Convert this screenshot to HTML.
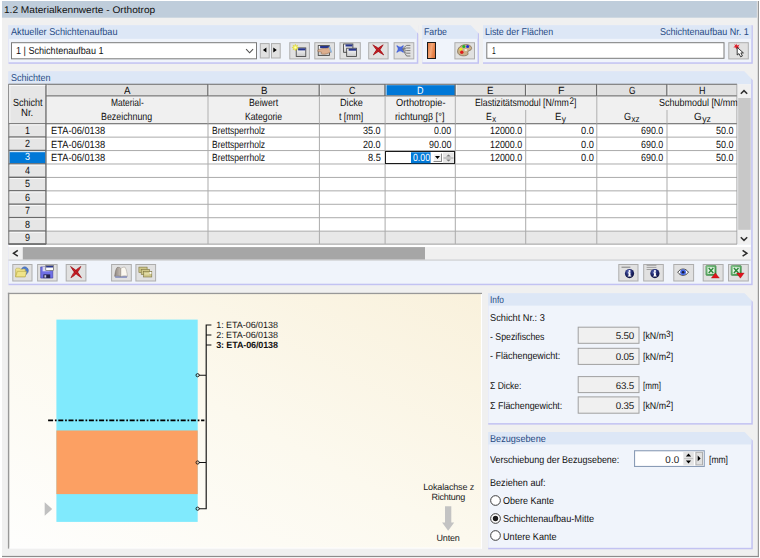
<!DOCTYPE html>
<html><head><meta charset="utf-8"><title>1.2 Materialkennwerte - Orthotrop</title>
<style>
html,body{margin:0;padding:0;}
body{width:760px;height:558px;overflow:hidden;background:#fff;font-family:"Liberation Sans",sans-serif;font-size:9.4px;color:#101010;position:relative;}
div{position:absolute;box-sizing:border-box;white-space:nowrap;}
svg{position:absolute;overflow:visible;}
.t{line-height:12px;height:12px;text-rendering:geometricPrecision;}

</style></head><body>
<svg style="left:0;top:0" width="760" height="558" viewBox="0 0 760 558"><rect x="0.00" y="0.00" width="760.00" height="558.00" fill="#fff"/><rect x="2.00" y="1.00" width="756.00" height="555.00" fill="#f0f0f0"/><rect x="757.80" y="1.00" width="1.10" height="556.10" fill="#8c8c8c"/><rect x="2.00" y="555.90" width="756.90" height="1.20" fill="#8c8c8c"/><rect x="2.00" y="1.00" width="754.90" height="16.70" fill="#bfcddb"/></svg>
<div class="t " style="left:3.80px;top:5.00px;font-size:9.7px;transform:scaleX(1.0439);transform-origin:0 50%;color:#111;">1.2 Materialkennwerte - Orthotrop</div>
<svg style="left:0;top:0" width="760" height="558" viewBox="0 0 760 558"><rect x="8.50" y="25.30" width="409.80" height="38.50" fill="#c2c2f2"/><rect x="8.50" y="25.30" width="408.30" height="37.00" fill="#f0f4fb"/><rect x="8.50" y="25.30" width="408.30" height="13.50" fill="#dde7f6"/><path d="M409.70 24.80H418.80V34.20Z" fill="#f0f0f0"/></svg>
<div class="t " style="left:10.50px;top:27.00px;font-size:9.9px;transform:scaleX(0.9282);transform-origin:0 50%;color:#274a84;">Aktueller Schichtenaufbau</div>
<svg style="left:0;top:0" width="760" height="558" viewBox="0 0 760 558"><rect x="11.50" y="42.70" width="245.00" height="16.10" fill="#ffffff" stroke="#7a7a7a" stroke-width="1.0"/></svg>
<div class="t " style="left:16.25px;top:46.00px;font-size:10.2px;transform:scaleX(0.8895);transform-origin:0 50%;">1 | Schichtenaufbau 1</div>
<svg style="left:0;top:0" width="760" height="558" viewBox="0 0 760 558"><rect x="260.30" y="43.60" width="8.90" height="14.40" fill="#e1e1e1" stroke="#adadad" stroke-width="1.0"/><rect x="271.50" y="43.60" width="8.70" height="14.40" fill="#e1e1e1" stroke="#adadad" stroke-width="1.0"/></svg>
<svg style="left:0;top:0" width="760" height="558" viewBox="0 0 760 558"><path d="M246.1 49.1 L249.6 52.8 L253.1 49.1" fill="none" stroke="#505050" stroke-width="1.05"/><path d="M266.4 47.6 L262.9 50.1 L266.4 52.6Z M273.3 47.6 L276.8 50.1 L273.3 52.6Z" fill="#000"/></svg>
<svg style="left:0;top:0" width="760" height="558" viewBox="0 0 760 558"><rect x="289.80" y="42.70" width="19.60" height="16.20" fill="#e1e1e1" stroke="#adadad" stroke-width="1.0"/><rect x="314.80" y="42.70" width="19.70" height="16.20" fill="#e1e1e1" stroke="#adadad" stroke-width="1.0"/><rect x="340.00" y="42.70" width="20.30" height="16.20" fill="#e1e1e1" stroke="#adadad" stroke-width="1.0"/><rect x="368.70" y="42.70" width="19.40" height="16.20" fill="#e1e1e1" stroke="#adadad" stroke-width="1.0"/><rect x="394.10" y="42.70" width="19.70" height="16.20" fill="#e1e1e1" stroke="#adadad" stroke-width="1.0"/><rect x="422.30" y="25.30" width="56.70" height="38.50" fill="#c2c2f2"/><rect x="422.30" y="25.30" width="55.20" height="37.00" fill="#f0f4fb"/><rect x="422.30" y="25.30" width="55.20" height="13.50" fill="#dde7f6"/><path d="M470.40 24.80H479.50V34.20Z" fill="#f0f0f0"/></svg>
<div class="t " style="left:424.20px;top:27.00px;font-size:9.9px;transform:scaleX(0.8877);transform-origin:0 50%;color:#274a84;">Farbe</div>
<div class="" style="left:427.20px;top:42.00px;width:9.20px;height:16.80px;background:linear-gradient(100deg,#e27a42,#f4a878 45%,#e8854d 70%,#d9703a);border:1.1px solid #1a1a1a;"></div>
<svg style="left:0;top:0" width="760" height="558" viewBox="0 0 760 558"><rect x="454.90" y="42.70" width="19.60" height="16.20" fill="#e1e1e1" stroke="#adadad" stroke-width="1.0"/><rect x="483.00" y="25.30" width="269.80" height="38.50" fill="#c2c2f2"/><rect x="483.00" y="25.30" width="268.30" height="37.00" fill="#f0f4fb"/><rect x="483.00" y="25.30" width="268.30" height="13.50" fill="#dde7f6"/></svg>
<div class="t " style="left:485.00px;top:27.00px;font-size:9.9px;transform:scaleX(0.9008);transform-origin:0 50%;color:#274a84;">Liste der Flächen</div>
<div class="t " style="left:659.50px;top:27.00px;font-size:9.9px;transform:scaleX(0.9133);transform-origin:0 50%;color:#274a84;">Schichtenaufbau Nr. 1</div>
<svg style="left:0;top:0" width="760" height="558" viewBox="0 0 760 558"><rect x="486.80" y="42.70" width="237.20" height="15.60" fill="#ffffff" stroke="#7a7a7a" stroke-width="1.0"/></svg>
<div class="t " style="left:492.30px;top:46.00px;font-size:10.2px;transform:scaleX(0.6523);transform-origin:0 50%;">1</div>
<svg style="left:0;top:0" width="760" height="558" viewBox="0 0 760 558"><rect x="728.80" y="42.70" width="19.50" height="16.20" fill="#e1e1e1" stroke="#adadad" stroke-width="1.0"/><rect x="8.50" y="71.50" width="744.20" height="213.70" fill="#c2c2f2"/><rect x="8.50" y="71.50" width="742.70" height="212.20" fill="#f0f4fb"/><rect x="8.50" y="71.50" width="742.70" height="12.50" fill="#dde7f6"/><path d="M744.10 71.00H753.20V80.40Z" fill="#f0f0f0"/></svg>
<div class="t " style="left:10.50px;top:73.00px;font-size:9.9px;transform:scaleX(0.9107);transform-origin:0 50%;color:#274a84;">Schichten</div>
<svg style="left:0;top:0" width="760" height="558" viewBox="0 0 760 558"><rect x="8.50" y="84.20" width="728.50" height="159.90" fill="#fff"/><rect x="8.50" y="84.20" width="728.50" height="39.50" fill="#f0f0f0"/><rect x="46.00" y="84.20" width="691.00" height="11.80" fill="#e0e0e0"/><rect x="8.50" y="84.20" width="37.50" height="159.90" fill="#e6e6e6"/><rect x="46.00" y="231.14" width="691.00" height="12.96" fill="#e8e8e8"/><rect x="385.10" y="85.20" width="70.20" height="10.30" fill="#0078d7"/><rect x="9.50" y="151.06" width="36.00" height="12.43" fill="#0078d7"/><rect x="46.00" y="136.63" width="691.00" height="1.00" fill="#ababab"/><rect x="46.00" y="150.06" width="691.00" height="1.00" fill="#ababab"/><rect x="46.00" y="163.49" width="691.00" height="1.00" fill="#ababab"/><rect x="46.00" y="176.92" width="691.00" height="1.00" fill="#ababab"/><rect x="46.00" y="190.35" width="691.00" height="1.00" fill="#ababab"/><rect x="46.00" y="203.78" width="691.00" height="1.00" fill="#ababab"/><rect x="46.00" y="217.21" width="691.00" height="1.00" fill="#ababab"/><rect x="46.00" y="230.64" width="691.00" height="1.00" fill="#ababab"/><rect x="46.00" y="243.60" width="691.00" height="1.00" fill="#ababab"/><rect x="207.50" y="123.70" width="1.00" height="120.40" fill="#ababab"/><rect x="318.90" y="123.70" width="1.00" height="120.40" fill="#ababab"/><rect x="384.60" y="123.70" width="1.00" height="120.40" fill="#ababab"/><rect x="454.80" y="123.70" width="1.00" height="120.40" fill="#ababab"/><rect x="525.20" y="123.70" width="1.00" height="120.40" fill="#ababab"/><rect x="596.30" y="123.70" width="1.00" height="120.40" fill="#ababab"/><rect x="666.50" y="123.70" width="1.00" height="120.40" fill="#ababab"/><rect x="8.50" y="83.70" width="728.50" height="1.20" fill="#7d7d7d"/><rect x="46.00" y="95.20" width="691.00" height="1.30" fill="#808080"/><rect x="8.50" y="123.00" width="728.50" height="1.30" fill="#808080"/><rect x="46.40" y="84.80" width="1.00" height="10.40" fill="#f8f8f8"/><rect x="208.40" y="84.80" width="1.00" height="10.40" fill="#f8f8f8"/><rect x="319.80" y="84.80" width="1.00" height="10.40" fill="#f8f8f8"/><rect x="385.50" y="84.80" width="1.00" height="10.40" fill="#f8f8f8"/><rect x="455.70" y="84.80" width="1.00" height="10.40" fill="#f8f8f8"/><rect x="526.10" y="84.80" width="1.00" height="10.40" fill="#f8f8f8"/><rect x="597.20" y="84.80" width="1.00" height="10.40" fill="#f8f8f8"/><rect x="667.40" y="84.80" width="1.00" height="10.40" fill="#f8f8f8"/><rect x="207.20" y="84.20" width="1.20" height="11.80" fill="#6c6c6c"/><rect x="318.60" y="84.20" width="1.20" height="11.80" fill="#6c6c6c"/><rect x="384.30" y="84.20" width="1.20" height="11.80" fill="#6c6c6c"/><rect x="454.50" y="84.20" width="1.20" height="11.80" fill="#6c6c6c"/><rect x="524.90" y="84.20" width="1.20" height="11.80" fill="#6c6c6c"/><rect x="596.00" y="84.20" width="1.20" height="11.80" fill="#6c6c6c"/><rect x="666.20" y="84.20" width="1.20" height="11.80" fill="#6c6c6c"/><rect x="207.50" y="96.00" width="1.00" height="27.70" fill="#b0b0b0"/><rect x="318.90" y="96.00" width="1.00" height="27.70" fill="#b0b0b0"/><rect x="384.60" y="96.00" width="1.00" height="27.70" fill="#b0b0b0"/><rect x="454.80" y="96.00" width="1.00" height="27.70" fill="#b0b0b0"/><rect x="525.20" y="110.00" width="1.00" height="13.70" fill="#b0b0b0"/><rect x="596.30" y="96.00" width="1.00" height="27.70" fill="#b0b0b0"/><rect x="666.50" y="110.00" width="1.00" height="13.70" fill="#b0b0b0"/><rect x="8.50" y="136.33" width="37.50" height="1.40" fill="#6a6a6a"/><rect x="8.50" y="149.76" width="37.50" height="1.40" fill="#6a6a6a"/><rect x="8.50" y="163.19" width="37.50" height="1.40" fill="#6a6a6a"/><rect x="8.50" y="176.62" width="37.50" height="1.40" fill="#6a6a6a"/><rect x="8.50" y="190.05" width="37.50" height="1.40" fill="#6a6a6a"/><rect x="8.50" y="203.48" width="37.50" height="1.40" fill="#6a6a6a"/><rect x="8.50" y="216.91" width="37.50" height="1.40" fill="#6a6a6a"/><rect x="8.50" y="230.34" width="37.50" height="1.40" fill="#6a6a6a"/><rect x="8.50" y="243.30" width="37.50" height="1.40" fill="#6a6a6a"/><rect x="9.50" y="124.30" width="35.80" height="1.00" fill="#fbfbfb"/><rect x="9.50" y="137.73" width="35.80" height="1.00" fill="#fbfbfb"/><rect x="9.50" y="151.16" width="35.80" height="1.00" fill="#fbfbfb"/><rect x="9.50" y="164.59" width="35.80" height="1.00" fill="#fbfbfb"/><rect x="9.50" y="178.02" width="35.80" height="1.00" fill="#fbfbfb"/><rect x="9.50" y="191.45" width="35.80" height="1.00" fill="#fbfbfb"/><rect x="9.50" y="204.88" width="35.80" height="1.00" fill="#fbfbfb"/><rect x="9.50" y="218.31" width="35.80" height="1.00" fill="#fbfbfb"/><rect x="9.50" y="231.74" width="35.80" height="1.00" fill="#fbfbfb"/><rect x="45.30" y="84.20" width="1.30" height="159.90" fill="#6a6a6a"/><rect x="8.20" y="84.20" width="1.10" height="159.90" fill="#7d7d7d"/><rect x="9.30" y="84.90" width="1.00" height="38.10" fill="#fbfbfb"/><rect x="9.30" y="84.90" width="36.00" height="1.00" fill="#fbfbfb"/><rect x="736.50" y="84.20" width="1.00" height="159.90" fill="#9a9a9a"/><rect x="8.50" y="243.50" width="38.00" height="1.20" fill="#6a6a6a"/><rect x="46.50" y="243.90" width="690.50" height="1.10" fill="#c0c0c0"/><rect x="8.50" y="245.00" width="742.20" height="2.20" fill="#fff"/></svg>
<div class="t " style="left:12.50px;top:98.00px;font-size:10.4px;transform:scaleX(0.8657);transform-origin:0 50%;">Schicht</div>
<div class="t " style="left:21.25px;top:108.00px;font-size:10.4px;transform:scaleX(0.9224);transform-origin:0 50%;">Nr.</div>
<div class="t " style="left:123.90px;top:86.00px;font-size:10.4px;transform:scaleX(0.9369);transform-origin:0 50%;">A</div>
<div class="t " style="left:260.60px;top:86.00px;font-size:10.4px;transform:scaleX(0.9369);transform-origin:0 50%;">B</div>
<div class="t " style="left:349.15px;top:86.00px;font-size:10.4px;transform:scaleX(0.8649);transform-origin:0 50%;">C</div>
<div class="t " style="left:417.10px;top:86.00px;font-size:10.4px;transform:scaleX(0.8649);transform-origin:0 50%;color:#fff;">D</div>
<div class="t " style="left:487.40px;top:86.00px;font-size:10.4px;transform:scaleX(0.9369);transform-origin:0 50%;">E</div>
<div class="t " style="left:558.15px;top:86.00px;font-size:10.4px;transform:scaleX(1.0221);transform-origin:0 50%;">F</div>
<div class="t " style="left:628.80px;top:86.00px;font-size:10.4px;transform:scaleX(0.8031);transform-origin:0 50%;">G</div>
<div class="t " style="left:698.90px;top:86.00px;font-size:10.4px;transform:scaleX(0.8649);transform-origin:0 50%;">H</div>
<div class="t " style="left:110.50px;top:98.00px;font-size:10.4px;transform:scaleX(0.8090);transform-origin:0 50%;">Material-</div>
<div class="t " style="left:101.00px;top:112.00px;font-size:10.4px;transform:scaleX(0.8520);transform-origin:0 50%;">Bezeichnung</div>
<div class="t " style="left:248.80px;top:98.00px;font-size:10.4px;transform:scaleX(0.8397);transform-origin:0 50%;">Beiwert</div>
<div class="t " style="left:244.60px;top:112.00px;font-size:10.4px;transform:scaleX(0.8340);transform-origin:0 50%;">Kategorie</div>
<div class="t " style="left:339.60px;top:98.00px;font-size:10.4px;transform:scaleX(0.8813);transform-origin:0 50%;">Dicke</div>
<div class="t " style="left:339.00px;top:112.00px;font-size:10.4px;transform:scaleX(0.8385);transform-origin:0 50%;">t [mm]</div>
<div class="t " style="left:396.20px;top:98.00px;font-size:10.4px;transform:scaleX(0.8926);transform-origin:0 50%;">Orthotropie-</div>
<div class="t " style="left:394.70px;top:112.00px;font-size:10.4px;transform:scaleX(0.8929);transform-origin:0 50%;">richtung<span style="font-size:9.8px">β</span> [°]</div>
<div class="t " style="left:474.80px;top:98.00px;font-size:10.4px;transform:scaleX(0.8411);transform-origin:0 50%;">Elastizitätsmodul [N/mm<span style="font-size:9.6px;line-height:0;position:relative;top:-2.4px;margin-left:1px">2</span>]</div>
<div class="t " style="left:485.80px;top:112.00px;font-size:10.4px;transform:scaleX(0.8395);transform-origin:0 50%;">E<span style="font-size:9.2px;line-height:0;position:relative;top:1.8px;margin-left:0.5px">x</span></div>
<div class="t " style="left:555.30px;top:112.00px;font-size:10.4px;transform:scaleX(0.9226);transform-origin:0 50%;">E<span style="font-size:9.2px;line-height:0;position:relative;top:1.8px;margin-left:0.5px">y</span></div>
<div class="t " style="left:658.50px;top:98.00px;font-size:10.4px;transform:scaleX(0.8636);transform-origin:0 50%;">Schubmodul [N/mm</div>
<div class="t " style="left:623.80px;top:112.00px;font-size:10.4px;transform:scaleX(0.8773);transform-origin:0 50%;">G<span style="font-size:9.2px;line-height:0;position:relative;top:1.8px;margin-left:0.5px">xz</span></div>
<div class="t " style="left:694.10px;top:112.00px;font-size:10.4px;transform:scaleX(0.9504);transform-origin:0 50%;">G<span style="font-size:9.2px;line-height:0;position:relative;top:1.8px;margin-left:0.5px">yz</span></div>
<div class="t " style="left:25.10px;top:126.00px;font-size:10.4px;transform:scaleX(0.8649);transform-origin:0 50%;">1</div>
<div class="t " style="left:25.10px;top:139.00px;font-size:10.4px;transform:scaleX(0.8649);transform-origin:0 50%;">2</div>
<div class="t " style="left:25.10px;top:152.00px;font-size:10.4px;transform:scaleX(0.8649);transform-origin:0 50%;color:#fff;">3</div>
<div class="t " style="left:25.10px;top:166.00px;font-size:10.4px;transform:scaleX(0.8649);transform-origin:0 50%;">4</div>
<div class="t " style="left:25.10px;top:179.00px;font-size:10.4px;transform:scaleX(0.8649);transform-origin:0 50%;">5</div>
<div class="t " style="left:25.10px;top:193.00px;font-size:10.4px;transform:scaleX(0.8649);transform-origin:0 50%;">6</div>
<div class="t " style="left:25.10px;top:206.00px;font-size:10.4px;transform:scaleX(0.8649);transform-origin:0 50%;">7</div>
<div class="t " style="left:25.10px;top:220.00px;font-size:10.4px;transform:scaleX(0.8649);transform-origin:0 50%;">8</div>
<div class="t " style="left:25.10px;top:233.00px;font-size:10.4px;transform:scaleX(0.8649);transform-origin:0 50%;">9</div>
<div class="t " style="left:50.50px;top:126.00px;font-size:10.4px;transform:scaleX(0.8947);transform-origin:0 50%;">ETA-06/0138</div>
<div class="t " style="left:212.20px;top:126.00px;font-size:10.4px;transform:scaleX(0.8209);transform-origin:0 50%;">Brettsperrholz</div>
<div class="t " style="left:363.20px;top:126.00px;font-size:10.4px;transform:scaleX(0.8698);transform-origin:0 50%;">35.0</div>
<div class="t " style="left:434.10px;top:126.00px;font-size:10.4px;transform:scaleX(0.8451);transform-origin:0 50%;">0.00</div>
<div class="t " style="left:490.00px;top:126.00px;font-size:10.4px;transform:scaleX(0.8572);transform-origin:0 50%;">12000.0</div>
<div class="t " style="left:580.50px;top:126.00px;font-size:10.4px;transform:scaleX(0.8925);transform-origin:0 50%;">0.0</div>
<div class="t " style="left:640.60px;top:126.00px;font-size:10.4px;transform:scaleX(0.8572);transform-origin:0 50%;">690.0</div>
<div class="t " style="left:716.40px;top:126.00px;font-size:10.4px;transform:scaleX(0.8649);transform-origin:0 50%;">50.0</div>
<div class="t " style="left:50.50px;top:140.00px;font-size:10.4px;transform:scaleX(0.8947);transform-origin:0 50%;">ETA-06/0138</div>
<div class="t " style="left:212.20px;top:140.00px;font-size:10.4px;transform:scaleX(0.8209);transform-origin:0 50%;">Brettsperrholz</div>
<div class="t " style="left:363.20px;top:140.00px;font-size:10.4px;transform:scaleX(0.8698);transform-origin:0 50%;">20.0</div>
<div class="t " style="left:428.80px;top:140.00px;font-size:10.4px;transform:scaleX(0.8610);transform-origin:0 50%;">90.00</div>
<div class="t " style="left:490.00px;top:140.00px;font-size:10.4px;transform:scaleX(0.8572);transform-origin:0 50%;">12000.0</div>
<div class="t " style="left:580.50px;top:140.00px;font-size:10.4px;transform:scaleX(0.8925);transform-origin:0 50%;">0.0</div>
<div class="t " style="left:640.60px;top:140.00px;font-size:10.4px;transform:scaleX(0.8572);transform-origin:0 50%;">690.0</div>
<div class="t " style="left:716.40px;top:140.00px;font-size:10.4px;transform:scaleX(0.8649);transform-origin:0 50%;">50.0</div>
<div class="t " style="left:50.50px;top:153.00px;font-size:10.4px;transform:scaleX(0.8947);transform-origin:0 50%;">ETA-06/0138</div>
<div class="t " style="left:212.20px;top:153.00px;font-size:10.4px;transform:scaleX(0.8209);transform-origin:0 50%;">Brettsperrholz</div>
<div class="t " style="left:368.00px;top:153.00px;font-size:10.4px;transform:scaleX(0.8856);transform-origin:0 50%;">8.5</div>
<div class="t " style="left:490.00px;top:153.00px;font-size:10.4px;transform:scaleX(0.8572);transform-origin:0 50%;">12000.0</div>
<div class="t " style="left:580.50px;top:153.00px;font-size:10.4px;transform:scaleX(0.8925);transform-origin:0 50%;">0.0</div>
<div class="t " style="left:640.60px;top:153.00px;font-size:10.4px;transform:scaleX(0.8572);transform-origin:0 50%;">690.0</div>
<div class="t " style="left:716.40px;top:153.00px;font-size:10.4px;transform:scaleX(0.8649);transform-origin:0 50%;">50.0</div>
<div class="" style="left:384.70px;top:151.46px;width:70.80px;height:13.03px;background:#fff;border:1.2px solid #1a1a1a;"></div>
<svg style="left:0;top:0" width="760" height="558" viewBox="0 0 760 558"><rect x="411.00" y="152.26" width="19.60" height="11.03" fill="#0078d7"/></svg>
<div class="t " style="left:413.00px;top:153.00px;font-size:10.4px;transform:scaleX(0.8402);transform-origin:0 50%;color:#fff;">0.00</div>
<div class="" style="left:432.80px;top:152.56px;width:9.60px;height:9.23px;background:#f2f2f2;border-right:1px solid #8a8a8a;border-bottom:1px solid #8a8a8a;border-top:1px solid #fff;border-left:1px solid #fff;"></div>
<svg style="left:435.2px;top:155.6px" width="5" height="3" viewBox="0 0 5 3"><path d="M0 0H5L2.5 3Z" fill="#000"/></svg>
<svg style="left:0;top:0" width="760" height="558" viewBox="0 0 760 558"><rect x="443.00" y="152.56" width="10.80" height="10.53" fill="#e6e6e6"/></svg>
<svg style="left:443px;top:152.6px" width="11" height="10" viewBox="0 0 11 10"><path d="M3.2 3.6 L5.5 1.4 L7.8 3.6Z M3.2 6.4 L5.5 8.6 L7.8 6.4Z" fill="#777"/><path d="M0.5 5H10.5" stroke="#9a9a9a" stroke-width="0.9"/></svg>
<svg style="left:0;top:0" width="760" height="558" viewBox="0 0 760 558"><rect x="737.50" y="84.20" width="13.20" height="160.40" fill="#f0f0f0"/><rect x="738.20" y="98.00" width="12.50" height="131.80" fill="#c8c8c8"/></svg>
<svg style="left:740.2px;top:88.6px" width="8" height="6" viewBox="0 0 8 6"><path d="M0.8 4.8 L4 1.6 L7.2 4.8" fill="none" stroke="#303030" stroke-width="1.5"/></svg>
<svg style="left:740.4px;top:235.8px" width="8" height="6" viewBox="0 0 8 6"><path d="M0.8 1.2 L4 4.4 L7.2 1.2" fill="none" stroke="#303030" stroke-width="1.5"/></svg>
<svg style="left:0;top:0" width="760" height="558" viewBox="0 0 760 558"><rect x="8.50" y="247.10" width="742.20" height="12.50" fill="#f0f0f0"/><rect x="22.80" y="247.10" width="402.20" height="12.50" fill="#a6a6a6"/><rect x="8.50" y="259.60" width="742.20" height="0.90" fill="#c2c2c2"/></svg>
<svg style="left:0;top:0" width="760" height="558" viewBox="0 0 760 558"><path d="M17.8 250.4 L13.5 253.3 L17.8 256.2 M742.6 250.4 L746.9 253.3 L742.6 256.2" fill="none" stroke="#2a2a2a" stroke-width="1.5"/></svg>
<svg style="left:0;top:0" width="760" height="558" viewBox="0 0 760 558"><rect x="12.80" y="264.50" width="19.20" height="16.50" fill="#e1e1e1" stroke="#adadad" stroke-width="1.0"/><rect x="37.60" y="264.50" width="19.50" height="16.50" fill="#e1e1e1" stroke="#adadad" stroke-width="1.0"/><rect x="66.20" y="264.50" width="19.70" height="16.50" fill="#e1e1e1" stroke="#adadad" stroke-width="1.0"/><rect x="111.60" y="264.50" width="19.70" height="16.50" fill="#e1e1e1" stroke="#adadad" stroke-width="1.0"/><rect x="135.90" y="264.50" width="19.70" height="16.50" fill="#e1e1e1" stroke="#adadad" stroke-width="1.0"/><rect x="618.80" y="264.50" width="19.20" height="16.50" fill="#e1e1e1" stroke="#adadad" stroke-width="1.0"/><rect x="643.70" y="264.50" width="19.60" height="16.50" fill="#e1e1e1" stroke="#adadad" stroke-width="1.0"/><rect x="673.80" y="264.50" width="19.80" height="16.50" fill="#e1e1e1" stroke="#adadad" stroke-width="1.0"/><rect x="703.20" y="264.50" width="19.90" height="16.50" fill="#e1e1e1" stroke="#adadad" stroke-width="1.0"/><rect x="728.50" y="264.50" width="19.80" height="16.50" fill="#e1e1e1" stroke="#adadad" stroke-width="1.0"/></svg>
<div class="" style="left:9.00px;top:294.00px;width:472.00px;height:254.00px;background:linear-gradient(to top right,#fefefd 0%,#fcf9ee 50%,#f9f1dc 100%);"></div>
<svg style="left:0;top:0" width="760" height="558" viewBox="0 0 760 558"><rect x="7.90" y="292.80" width="1.40" height="255.80" fill="#989898"/><rect x="7.90" y="292.80" width="474.10" height="1.30" fill="#989898"/><rect x="480.90" y="294.10" width="1.10" height="254.50" fill="#ffffff"/><rect x="9.30" y="547.60" width="472.70" height="1.00" fill="#ffffff"/><rect x="56.40" y="319.60" width="141.30" height="202.30" fill="#80eafd"/><rect x="56.40" y="430.50" width="141.30" height="63.60" fill="#fca063"/></svg>
<svg style="left:0;top:0" width="760" height="558" viewBox="0 0 760 558"><path d="M48.1 420.4H204.4" stroke="#000" stroke-width="1.8" stroke-dasharray="5 1.8 1.7 1.7" fill="none"/><path d="M211.4 325H206.2V508.7H199 M206.2 335H211.4 M206.2 345H211.4 M206.2 375.2H199 M206.2 462.5H199" stroke="#111" stroke-width="1.15" fill="none"/><circle cx="197.6" cy="375.2" r="1.6" fill="none" stroke="#111" stroke-width="0.9"/><circle cx="197.6" cy="462.5" r="1.6" fill="none" stroke="#111" stroke-width="0.9"/><circle cx="197.6" cy="508.7" r="1.6" fill="none" stroke="#111" stroke-width="0.9"/><path d="M44.7 502.3V515.7L52.2 509Z" fill="#c0c0c0"/><path d="M445 506.3H451.3V522.6H454.2L448.15 530.8L442.1 522.6H445Z" fill="#c3c3c3"/></svg>
<div class="t " style="left:216.20px;top:319.00px;font-size:9px;letter-spacing:-0.048px;color:#151515;">1: ETA-06/0138</div>
<div class="t " style="left:216.20px;top:329.00px;font-size:9px;letter-spacing:-0.048px;color:#151515;">2: ETA-06/0138</div>
<div class="t " style="left:216.20px;top:339.00px;font-size:9px;letter-spacing:-0.120px;color:#111;font-weight:bold;">3: ETA-06/0138</div>
<div class="t " style="left:423.20px;top:481.00px;font-size:9px;letter-spacing:-0.137px;color:#222;">Lokalachse z</div>
<div class="t " style="left:431.50px;top:491.00px;font-size:9px;letter-spacing:-0.241px;color:#222;">Richtung</div>
<div class="t " style="left:436.60px;top:532.00px;font-size:9px;letter-spacing:-0.226px;color:#222;">Unten</div>
<svg style="left:0;top:0" width="760" height="558" viewBox="0 0 760 558"><rect x="488.20" y="293.30" width="264.60" height="131.30" fill="#c2c2f2"/><rect x="488.20" y="293.30" width="263.10" height="129.80" fill="#f0f4fb"/><rect x="488.20" y="293.30" width="263.10" height="12.30" fill="#dde7f6"/><path d="M744.20 292.80H753.30V302.20Z" fill="#f0f0f0"/></svg>
<div class="t " style="left:489.60px;top:295.00px;font-size:9.9px;transform:scaleX(0.8432);transform-origin:0 50%;color:#274a84;">Info</div>
<div class="t " style="left:490.00px;top:313.00px;font-size:10px;transform:scaleX(0.9215);transform-origin:0 50%;">Schicht Nr.: 3</div>
<div class="t " style="left:490.00px;top:332.00px;font-size:10px;transform:scaleX(0.8755);transform-origin:0 50%;">- Spezifisches</div>
<div class="t " style="left:490.00px;top:351.00px;font-size:10px;transform:scaleX(0.8970);transform-origin:0 50%;">- Flächengewicht:</div>
<div class="t " style="left:490.40px;top:381.00px;font-size:10px;transform:scaleX(0.8544);transform-origin:0 50%;">Σ Dicke:</div>
<div class="t " style="left:490.40px;top:401.00px;font-size:10px;transform:scaleX(0.8900);transform-origin:0 50%;">Σ Flächengewicht:</div>
<svg style="left:0;top:0" width="760" height="558" viewBox="0 0 760 558"><rect x="578.20" y="327.20" width="60.80" height="16.10" fill="#f0f0f0" stroke="#a0a0a0" stroke-width="1.0"/></svg>
<div class="t " style="left:615.70px;top:331.00px;font-size:9.8px;letter-spacing:-0.145px;color:#222;">5.50</div>
<div class="t " style="left:642.60px;top:331.00px;font-size:10px;transform:scaleX(0.8825);transform-origin:0 50%;">[kN/m<span style="font-size:9.4px;line-height:0;position:relative;top:-2.4px;">3</span>]</div>
<svg style="left:0;top:0" width="760" height="558" viewBox="0 0 760 558"><rect x="578.20" y="348.30" width="60.80" height="16.10" fill="#f0f0f0" stroke="#a0a0a0" stroke-width="1.0"/></svg>
<div class="t " style="left:615.70px;top:352.00px;font-size:9.8px;letter-spacing:-0.145px;color:#222;">0.05</div>
<div class="t " style="left:642.60px;top:352.00px;font-size:10px;transform:scaleX(0.8825);transform-origin:0 50%;">[kN/m<span style="font-size:9.4px;line-height:0;position:relative;top:-2.4px;">2</span>]</div>
<svg style="left:0;top:0" width="760" height="558" viewBox="0 0 760 558"><rect x="578.20" y="376.60" width="60.80" height="16.00" fill="#f0f0f0" stroke="#a0a0a0" stroke-width="1.0"/></svg>
<div class="t " style="left:615.70px;top:381.00px;font-size:9.8px;letter-spacing:-0.145px;color:#222;">63.5</div>
<div class="t " style="left:642.60px;top:381.00px;font-size:10px;transform:scaleX(0.8056);transform-origin:0 50%;">[mm]</div>
<svg style="left:0;top:0" width="760" height="558" viewBox="0 0 760 558"><rect x="578.20" y="396.90" width="60.80" height="16.30" fill="#f0f0f0" stroke="#a0a0a0" stroke-width="1.0"/></svg>
<div class="t " style="left:615.70px;top:401.00px;font-size:9.8px;letter-spacing:-0.145px;color:#222;">0.35</div>
<div class="t " style="left:642.60px;top:401.00px;font-size:10px;transform:scaleX(0.8825);transform-origin:0 50%;">[kN/m<span style="font-size:9.4px;line-height:0;position:relative;top:-2.4px;">2</span>]</div>
<svg style="left:0;top:0" width="760" height="558" viewBox="0 0 760 558"><rect x="488.20" y="432.00" width="264.60" height="117.30" fill="#c2c2f2"/><rect x="488.20" y="432.00" width="263.10" height="115.80" fill="#f0f4fb"/><rect x="488.20" y="432.00" width="263.10" height="12.50" fill="#dde7f6"/><path d="M744.20 431.50H753.30V440.90Z" fill="#f0f0f0"/></svg>
<div class="t " style="left:489.60px;top:434.00px;font-size:10px;transform:scaleX(0.9122);transform-origin:0 50%;color:#274a84;">Bezugsebene</div>
<div class="t " style="left:490.00px;top:455.00px;font-size:10px;transform:scaleX(0.8944);transform-origin:0 50%;">Verschiebung der Bezugsebene:</div>
<svg style="left:0;top:0" width="760" height="558" viewBox="0 0 760 558"><rect x="634.55" y="450.75" width="69.70" height="15.70" fill="#fff" stroke="#8a9cb6" stroke-width="1.1"/></svg>
<div class="t " style="left:665.30px;top:455.00px;font-size:9.8px;letter-spacing:0.192px;color:#222;">0.0</div>
<svg style="left:0;top:0" width="760" height="558" viewBox="0 0 760 558"><rect x="683.30" y="451.80" width="10.50" height="13.60" fill="#e3e3e3"/><rect x="695.90" y="452.30" width="6.60" height="12.60" fill="#e1e1e1" stroke="#adadad" stroke-width="1.0"/></svg>
<svg style="left:0;top:0" width="760" height="558" viewBox="0 0 760 558"><path d="M685.9 456.6 L688.5 453.6 L691.1 456.6Z M685.9 460.6 L688.5 463.6 L691.1 460.6Z M697.7 455.6 L700.6 458.4 L697.7 461.2Z" fill="#000"/><path d="M684 458.6H693.2" stroke="#b8b8b8" stroke-width="0.8"/></svg>
<div class="t " style="left:708.60px;top:455.00px;font-size:10px;transform:scaleX(0.8551);transform-origin:0 50%;">[mm]</div>
<div class="t " style="left:490.00px;top:478.00px;font-size:10px;transform:scaleX(0.9089);transform-origin:0 50%;">Beziehen auf:</div>
<svg style="left:490px;top:494.8px" width="11" height="11" viewBox="0 0 11 11"><circle cx="5.5" cy="5.5" r="4.85" fill="#fff" stroke="#3c3c3c" stroke-width="1"/></svg>
<div class="t " style="left:503.00px;top:496.00px;font-size:10px;transform:scaleX(0.8974);transform-origin:0 50%;">Obere Kante</div>
<svg style="left:490px;top:512.6px" width="11" height="11" viewBox="0 0 11 11"><circle cx="5.5" cy="5.5" r="4.85" fill="#fff" stroke="#3c3c3c" stroke-width="1"/><circle cx="5.5" cy="5.5" r="2.7" fill="#1c1c1c"/></svg>
<div class="t " style="left:503.00px;top:514.00px;font-size:10px;transform:scaleX(0.9164);transform-origin:0 50%;">Schichtenaufbau-Mitte</div>
<svg style="left:490px;top:530.2px" width="11" height="11" viewBox="0 0 11 11"><circle cx="5.5" cy="5.5" r="4.85" fill="#fff" stroke="#3c3c3c" stroke-width="1"/></svg>
<div class="t " style="left:503.00px;top:532.00px;font-size:10px;transform:scaleX(0.9094);transform-origin:0 50%;">Untere Kante</div>
<svg style="left:0;top:0" width="760" height="558" viewBox="0 0 760 558"><defs><linearGradient id="wg" x1="0" y1="0" x2="0" y2="1"><stop offset="0" stop-color="#fdfdfd"/><stop offset="1" stop-color="#c9c9c9"/></linearGradient><radialGradient id="ig" cx="0.4" cy="0.3" r="0.8"><stop offset="0" stop-color="#5a68b8"/><stop offset="0.5" stop-color="#1c2468"/><stop offset="1" stop-color="#0a0e30"/></radialGradient><linearGradient id="gg" x1="0" y1="0" x2="1" y2="1"><stop offset="0" stop-color="#8fcf95"/><stop offset="1" stop-color="#2f8a3c"/></linearGradient><linearGradient id="fg" x1="0" y1="0" x2="0" y2="1"><stop offset="0" stop-color="#f3ea9a"/><stop offset="1" stop-color="#d6c655"/></linearGradient><linearGradient id="bk" x1="0" y1="0" x2="1" y2="0"><stop offset="0" stop-color="#8d8580"/><stop offset="1" stop-color="#c9c0b6"/></linearGradient><radialGradient id="sg"><stop offset="0" stop-color="#ffffd0"/><stop offset="0.6" stop-color="#f4f03a"/><stop offset="1" stop-color="#e0da20"/></radialGradient></defs><rect x="296.2" y="47.9" width="9.6" height="8.5" fill="url(#wg)" stroke="#3a3a3a" stroke-width="0.8"/><rect x="298.1" y="48.3" width="7.3" height="2.1" fill="#27358c"/><path d="M295.30 44.10 L295.95 45.93 L297.70 45.10 L296.87 46.85 L298.70 47.50 L296.87 48.15 L297.70 49.90 L295.95 49.07 L295.30 50.90 L294.65 49.07 L292.90 49.90 L293.73 48.15 L291.90 47.50 L293.73 46.85 L292.90 45.10 L294.65 45.93Z" fill="url(#sg)" stroke="#cfc82a" stroke-width="0.3"/><rect x="318.2" y="45.6" width="11.2" height="9.8" fill="url(#wg)" stroke="#3a3a3a" stroke-width="0.8"/><rect x="320.1" y="46.0" width="8.9" height="2.1" fill="#27358c"/><path d="M317.8 50.2 C320 48.6 323.5 48.2 326.5 48.6 L329.8 47 L331 52.2 L328 53.2 C326 54.4 322.5 54.6 321 53.6 L321.6 52.2 L317.9 51.6 Z" fill="#dcae8e" stroke="#8a6248" stroke-width="0.5"/><path d="M329.3 46.6 L331.4 52.6" stroke="#8fb6e0" stroke-width="1.6"/><rect x="343.6" y="44" width="9.3" height="8.3" fill="url(#wg)" stroke="#3a3a3a" stroke-width="0.8"/><rect x="345.5" y="44.4" width="7.0" height="2.1" fill="#27358c"/><rect x="346.7" y="48.2" width="9.8" height="8.2" fill="url(#wg)" stroke="#3a3a3a" stroke-width="0.8"/><rect x="348.6" y="48.6" width="7.5" height="2.1" fill="#27358c"/><path d="M372.80 44.80 Q376.46 51.88 383.80 55.00 Q380.14 47.92 372.80 44.80Z M383.20 44.80 Q376.27 48.01 373.20 55.00 Q380.13 51.79 383.20 44.80Z" fill="#cf1c24" stroke="#8e1218" stroke-width="0.6" stroke-linejoin="round"/><path d="M402.2 49 L406.6 45.4 H410.4 M402.2 49 L406.6 48 H410.4 M402.2 49 L406.6 50.6 H410.4 M402.2 49 L406.6 53.2 H410.4 M402.2 49 L406.6 56 H410.4" stroke="#6e6e6e" stroke-width="0.9" fill="none"/><path d="M397 45.9 Q400.1 48.7 403.2 45.9 Q400.4 49 403.2 52.1 Q400.1 49.3 397 52.1 Q399.8 49 397 45.9Z" fill="#4a6ce0" stroke="#4664d8" stroke-width="1.1" stroke-linejoin="round"/><path d="M457.6 52 C457.2 48 461 44.8 465.6 44.6 C469.4 44.4 471.9 46.4 471.6 48.6 C471.3 50.6 468.9 50.4 468 51.4 C467.2 52.6 469 53.8 467.4 55 C464.4 56.6 458 56 457.6 52Z" fill="#cbb08a" stroke="#77654a" stroke-width="0.7"/><circle cx="460.9" cy="49.3" r="1.5" fill="#f2e41c"/><circle cx="463.8" cy="46.6" r="1.5" fill="#22b428"/><circle cx="467.6" cy="46.5" r="1.5" fill="#2030d8"/><circle cx="461.8" cy="52.3" r="1.7" fill="#e01c1c"/><ellipse cx="465.8" cy="50" rx="1.4" ry="1" fill="#f2eee4"/><path d="M736.3 43.4 L737.1 45.4 L739.6 44.6 L738.2 46.4 L739.6 48 L737.3 47.6 L736.2 49.4 L735.6 47.4 L733.2 47.2 L735.2 46 L734.2 44.2 L736 45Z" fill="#e0202c"/><path d="M737.2 47.4 L737.2 55 L739 53.6 L740.6 56.8 L742.4 56 L740.9 52.9 L743.4 52.9 Z" fill="#fff" stroke="#111" stroke-width="0.8" stroke-linejoin="round"/><path d="M21 270.5 C21.5 266.5 26.5 265 28.3 269.6 C28.8 271.6 27.6 273.6 26 274.4 L25 272.6 C26.2 271 25.8 268.6 23.6 268.4 Z" fill="#4c7cd0" stroke="#2a4c98" stroke-width="0.4"/><path d="M15.6 269.2 L16.4 268.2 H19.6 L20.4 269.2 H25.2 V276.8 H15.6 Z" fill="url(#fg)" stroke="#b0a040" stroke-width="0.5"/><path d="M15.6 276.8 L17.4 271.4 H26.6 L25.2 276.8Z" fill="#efe48a" stroke="#b0a040" stroke-width="0.5"/><path d="M40.7 266.9 H51.6 L52.8 268.1 V278.1 H40.7Z" fill="#6f6fe6" stroke="#3a3aa0" stroke-width="0.6"/><rect x="42.6" y="266.9" width="7" height="4.4" fill="#d8d8f4"/><rect x="43.4" y="274.4" width="6.8" height="3.7" fill="#24244c"/><rect x="44.4" y="275.2" width="1.8" height="2.4" fill="#c8c8e8"/><rect x="45.8" y="265.6" width="7.6" height="5" fill="#fcfcfc" stroke="#555" stroke-width="0.6"/><rect x="46.1" y="265.9" width="7" height="1.6" fill="#27358c"/><path d="M70.50 266.40 Q74.06 273.97 81.50 277.80 Q77.94 270.23 70.50 266.40Z M80.90 266.40 Q73.87 270.32 70.90 277.80 Q77.93 273.88 80.90 266.40Z" fill="#cf1c24" stroke="#8e1218" stroke-width="0.6" stroke-linejoin="round"/><path d="M114.6 276.4 L115.4 277.4 H126.8 L127.4 276.4Z" fill="#4858a8"/><path d="M114.6 276.2 C115.2 272 115.6 269.4 117 267.6 C118.4 267 120 267.4 120.9 268.6 V276.6 C119 275.6 116.6 275.6 114.6 276.2Z" fill="url(#bk)" stroke="#6a625c" stroke-width="0.4"/><path d="M120.9 268.6 C122 267.2 124 266.8 125.2 267.4 C126.4 269.6 127 272.4 127.4 276.2 C125.2 275.6 122.8 275.6 120.9 276.6Z" fill="#fbf8f0" stroke="#8a847c" stroke-width="0.4"/><rect x="138.9" y="267.1" width="8.2" height="5.4" fill="#cfc78a" stroke="#7c7440" stroke-width="0.6"/><rect x="141.2" y="269.3" width="8.2" height="5.4" fill="#cfc78a" stroke="#7c7440" stroke-width="0.6"/><rect x="143.6" y="271.6" width="8.2" height="5.4" fill="#cfc78a" stroke="#7c7440" stroke-width="0.6"/><rect x="144.4" y="273.4" width="4.6" height="1" fill="#eee8b8"/><rect x="149.6" y="272" width="1.8" height="1.8" fill="#fff"/><path d="M621.5 267.2 H630.4" stroke="#666" stroke-width="0.8"/><circle cx="629.5" cy="273.6" r="4.6" fill="url(#ig)"/><rect x="628.6" y="272.40000000000003" width="1.9" height="3.6" fill="#fff"/><rect x="627.9" y="272.40000000000003" width="1.6" height="0.9" fill="#fff"/><rect x="627.8" y="275.6" width="3.5" height="0.9" fill="#fff"/><circle cx="629.55" cy="271.0" r="1.05" fill="#fff"/><path d="M646.6 265.3 H656.4 M646.6 267.4 H656.4 M646.6 269.5 H656.4" stroke="#999" stroke-width="0.9"/><circle cx="654.9" cy="273.6" r="4.6" fill="url(#ig)"/><rect x="654.0" y="272.40000000000003" width="1.9" height="3.6" fill="#fff"/><rect x="653.3" y="272.40000000000003" width="1.6" height="0.9" fill="#fff"/><rect x="653.1999999999999" y="275.6" width="3.5" height="0.9" fill="#fff"/><circle cx="654.9499999999999" cy="271.0" r="1.05" fill="#fff"/><path d="M677.8 272.2 C680.4 268 685.8 268 688.4 272.2 C685.8 276.4 680.4 276.4 677.8 272.2Z" fill="#fff" stroke="#333" stroke-width="0.9"/><circle cx="683.1" cy="272.2" r="2.9" fill="#4668e2"/><circle cx="683.1" cy="272.2" r="1.3" fill="#1a1a3a"/><rect x="705.9" y="265.6" width="10.2" height="9.8" rx="0.8" fill="url(#gg)" stroke="#2c7a38" stroke-width="0.5"/><rect x="707.5" y="267.2" width="7" height="6.6" fill="#e8f4e8"/><path d="M708.6999999999999 268 L713.3 273 M713.3 268 L708.6999999999999 273" stroke="#2f8a3c" stroke-width="1.5"/><path d="M711.3 278.1 L715.35 272.9 L719.4 278.1Z" fill="#e0141e" stroke="#900" stroke-width="0.3"/><rect x="731.1" y="265.6" width="10.2" height="9.8" rx="0.8" fill="url(#gg)" stroke="#2c7a38" stroke-width="0.5"/><rect x="732.7" y="267.2" width="7" height="6.6" fill="#e8f4e8"/><path d="M733.9 268 L738.5 273 M738.5 268 L733.9 273" stroke="#2f8a3c" stroke-width="1.5"/><path d="M736.5 273 H744.2 L740.35 278.2Z" fill="#e0141e" stroke="#900" stroke-width="0.3"/></svg>
</body></html>
